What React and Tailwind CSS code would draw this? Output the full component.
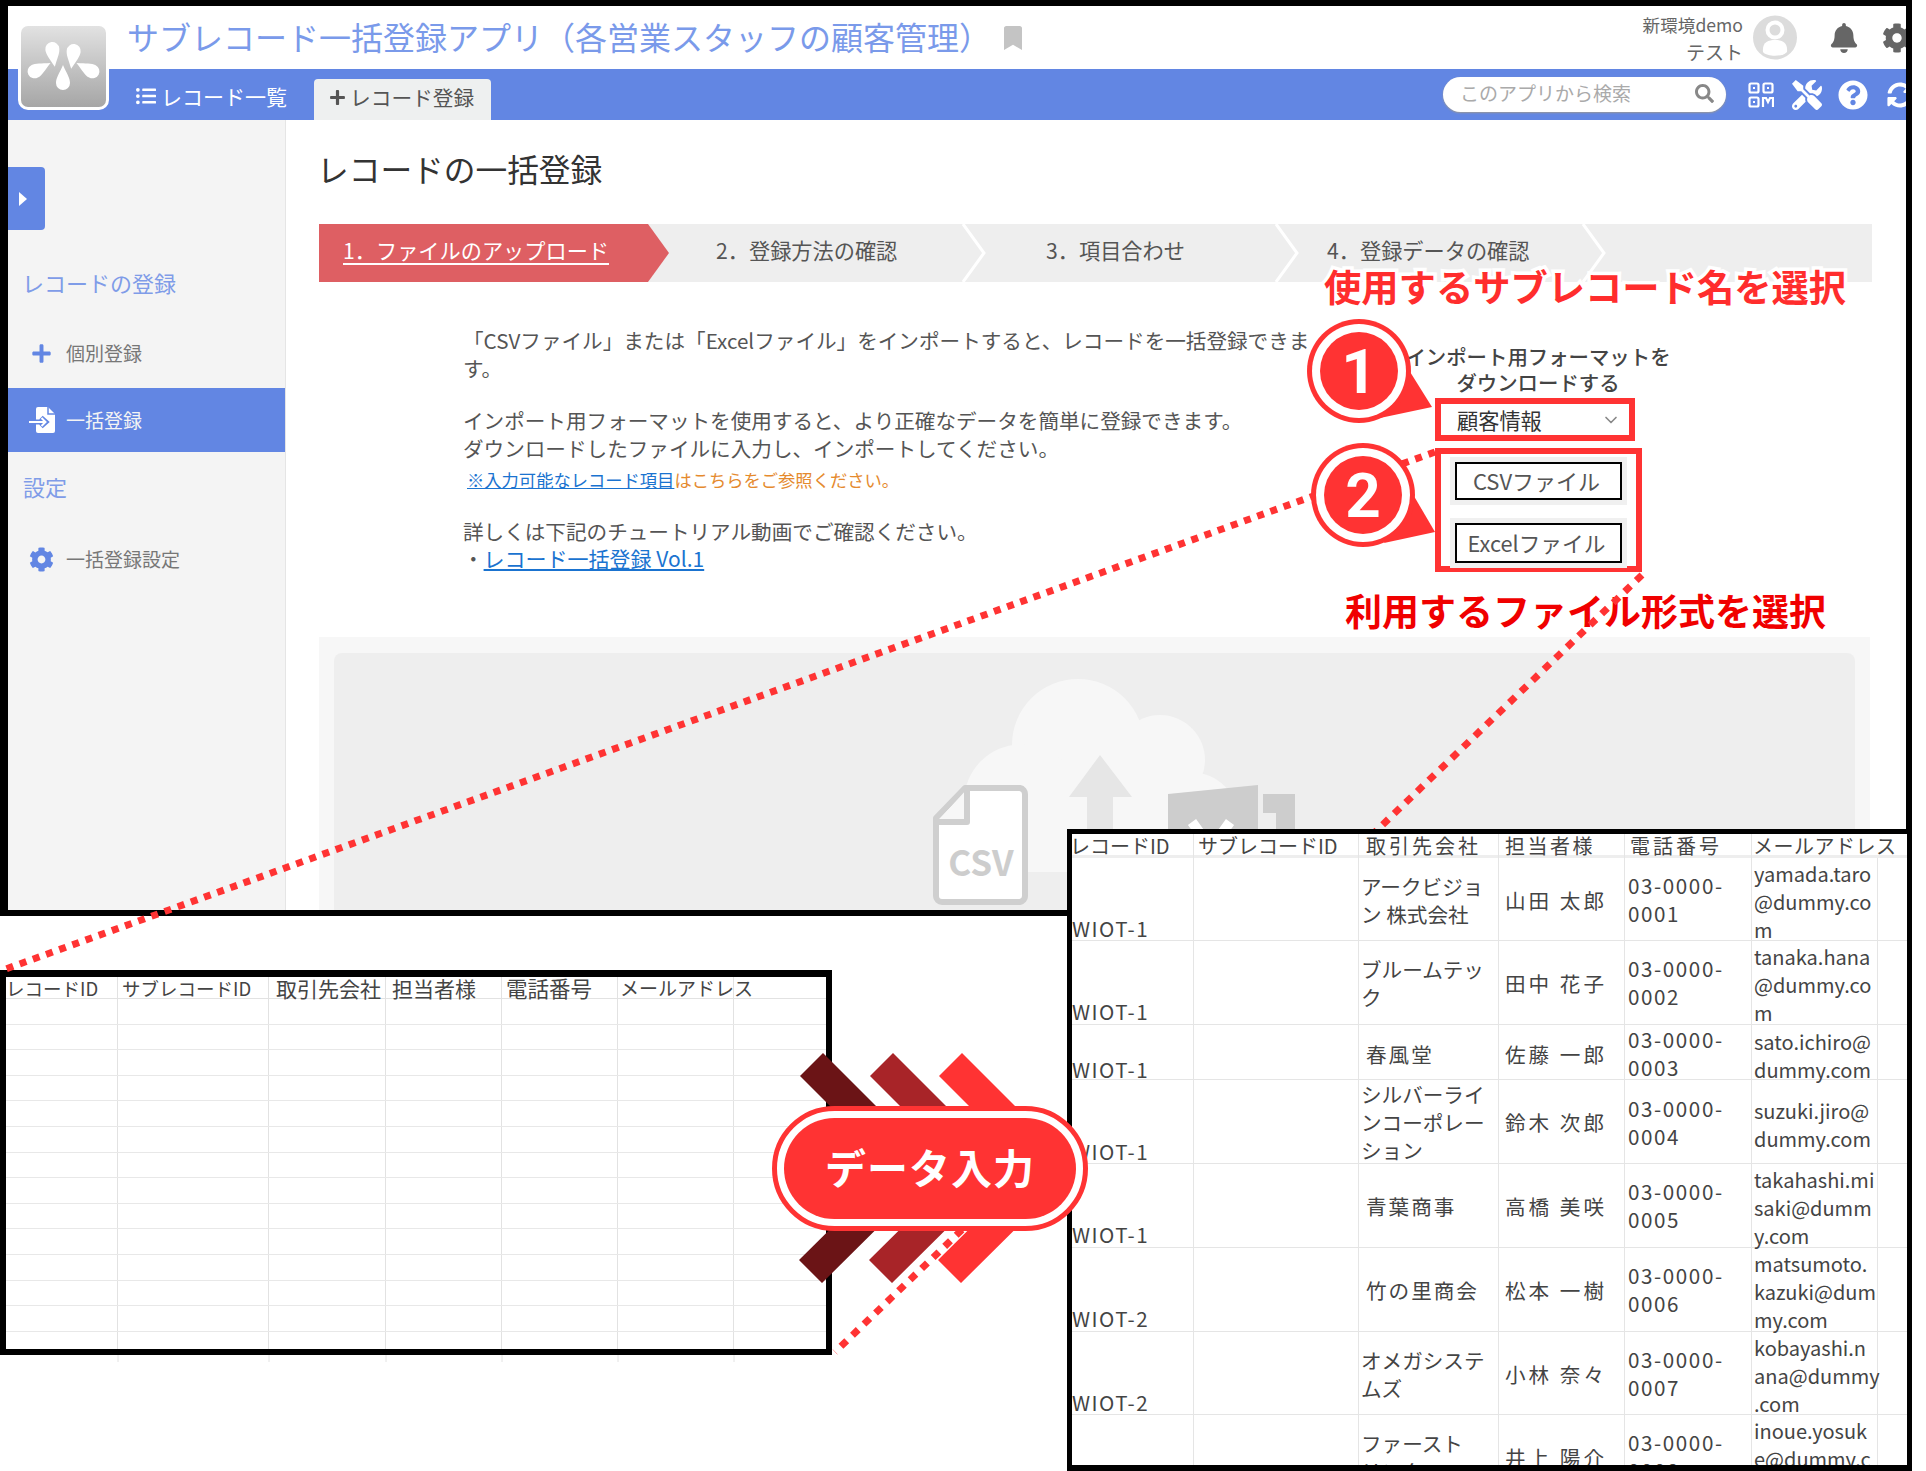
import React from 'react';
import { FaBell, FaBookmark, FaCog, FaListUl, FaPlus, FaQuestionCircle, FaSearch, FaSyncAlt, FaTools } from 'react-icons/fa';
import { ChevronDown } from 'lucide-react';

const steps = [
  { label: '1．ファイルのアップロード', w: 'w-[350px]', pl: 'pl-[24px]', active: true },
  { label: '2．登録方法の確認', w: 'w-[313px]', pl: 'pl-[47px]' },
  { label: '3．項目合わせ', w: 'w-[313px]', pl: 'pl-[64px]' },
  { label: '4．登録データの確認', w: 'w-[307px]', pl: 'pl-[32px]' },
];

const rows = [
  { h: 'h-[83px]', id: 'WIOT-1', company: ['アークビジョ', 'ン 株式会社'], person: '山田 太郎', tel: '0001', mail: ['yamada.taro', '@dummy.co', 'm'] },
  { h: 'h-[84px]', id: 'WIOT-1', company: ['ブルームテッ', 'ク'], person: '田中 花子', tel: '0002', mail: ['tanaka.hana', '@dummy.co', 'm'] },
  { h: 'h-[55px]', id: 'WIOT-1', company: ['春風堂'], wide: true, person: '佐藤 一郎', tel: '0003', mail: ['sato.ichiro@', 'dummy.com'] },
  { h: 'h-[84px]', id: 'WIOT-1', company: ['シルバーライ', 'ンコーポレー', 'ション'], person: '鈴木 次郎', tel: '0004', mail: ['suzuki.jiro@', 'dummy.com'] },
  { h: 'h-[84px]', id: 'WIOT-1', company: ['青葉商事'], wide: true, person: '高橋 美咲', tel: '0005', mail: ['takahashi.mi', 'saki@dumm', 'y.com'] },
  { h: 'h-[84px]', id: 'WIOT-2', company: ['竹の里商会'], wide: true, person: '松本 一樹', tel: '0006', mail: ['matsumoto.', 'kazuki@dum', 'my.com'] },
  { h: 'h-[83px]', id: 'WIOT-2', company: ['オメガシステ', 'ムズ'], person: '小林 奈々', tel: '0007', mail: ['kobayashi.n', 'ana@dummy', '.com'] },
  { h: 'h-[84px]', id: 'WIOT-2', company: ['ファースト', 'リンク'], person: '井上 陽介', tel: '0008', mail: ['inoue.yosuk', 'e@dummy.c', 'om'] },
];

function Logo() {
  const drop = 'M0 -13 C4 -4 7 0 7 5 A7 7 0 0 1 -7 5 C-7 0 -4 -4 0 -13Z';
  return (
    <div className="absolute left-[10px] top-[17px] z-10 h-[87px] w-[91px] rounded-[10px] border-[3px] border-white bg-gradient-to-b from-[#e2e2e2] to-[#a6a6a6]">
      <svg viewBox="0 0 85 81" className="h-full w-full" fill="#fff">
        <path d={drop} transform="translate(32 28) rotate(172)" />
        <path d={drop} transform="translate(52 30) rotate(188)" />
        <path d={drop} transform="translate(18 43) rotate(62)" />
        <path d={drop} transform="translate(67 43) rotate(-62)" />
        <path d={drop} transform="translate(42 52)" />
      </svg>
    </div>
  );
}

function Avatar() {
  return (
    <svg viewBox="0 0 44 45" className="ml-[10px] h-[45px] w-[44px] shrink-0">
      <circle cx="22" cy="22.5" r="22" fill="#dcdcdc" />
      <circle cx="22" cy="15" r="7.5" fill="none" stroke="#fff" strokeWidth="4" />
      <path d="M10 37 C9 27 15 25 22 25 C29 25 35 27 34 37 C30 42 14 42 10 37Z" fill="#fff" />
    </svg>
  );
}

function QrIcon() {
  return (
    <svg viewBox="0 0 26 26" className="ml-[22px] h-[26px] w-[26px] shrink-0" fill="none" stroke="#fff" strokeWidth="2.2">
      <rect x="1.5" y="1.5" width="9" height="9" rx="1.5" />
      <rect x="15.5" y="1.5" width="9" height="9" rx="1.5" />
      <rect x="1.5" y="15.5" width="9" height="9" rx="1.5" />
      <path d="M5 6h2M19 6h2M5 20h2" strokeWidth="2" />
      <path d="M15 25v-9h3l2 4 2-4h3v9" />
    </svg>
  );
}

function FileImportIcon() {
  return (
    <svg viewBox="0 0 27 26" className="h-[26px] w-[27px]">
      <path d="M7 2a2 2 0 0 1 2-2h10l7 7v17a2 2 0 0 1-2 2H9a2 2 0 0 1-2-2Z" fill="#fff" />
      <path d="M19 0v7h7" fill="none" stroke="#6286e3" strokeWidth="1.5" />
      <path d="M1 15h15M12 10.5l5 4.5-5 4.5" fill="none" stroke="#6286e3" strokeWidth="5" />
      <path d="M0 15h7" stroke="#fff" strokeWidth="2" />
      <path d="M7 15h9M12.5 11l4 4-4 4" fill="none" stroke="#fff" strokeWidth="2" />
    </svg>
  );
}

function UploadArt() {
  return (
    <svg viewBox="933 677 362 233" className="ml-[599px] mt-[24px] h-[233px] w-[362px]">
      <g fill="#f7f7f7">
        <circle cx="1078" cy="745" r="66" />
        <circle cx="1160" cy="760" r="45" />
        <circle cx="1022" cy="802" r="58" />
        <circle cx="1190" cy="822" r="50" />
        <rect x="1022" y="760" width="170" height="112" />
      </g>
      <path d="M1100 755 L1132 797 H1113 V880 H1087 V797 H1069Z" fill="#e6e6e6" />
      <path d="M1168 794 L1258 785 V910 H1168Z" fill="#cdcdcd" />
      <path d="M1263 794 H1295 V910 H1263 V873 H1276 V813 H1263Z" fill="#cdcdcd" />
      <path d="M1192 822 L1212 850 M1230 822 L1210 850" stroke="#fff" strokeWidth="10" />
      <path d="M965 788 H1020 A6 6 0 0 1 1025 794 V896 A6 6 0 0 1 1020 902 H942 A6 6 0 0 1 936 896 V818Z" fill="#fff" stroke="#cfcfcf" strokeWidth="6" strokeLinejoin="round" />
      <path d="M967 789 V822 H937" fill="#f7f7f7" stroke="#cfcfcf" strokeWidth="6" strokeLinejoin="round" />
      <text x="981" y="876" textAnchor="middle" fontSize="35" fontWeight="700" fill="#cdcdcd">CSV</text>
    </svg>
  );
}

function MainWindow() {
  return (
    <div className="absolute left-0 top-0 h-[916px] w-[1912px] overflow-hidden border-b-[6px] border-l-[8px] border-r-[6px] border-t-[6px] border-black bg-white">
      <Logo />
      <header className="flex h-[63px] items-center bg-white pl-[119px]">
        <h1 className="whitespace-nowrap pb-[4px] text-[32px] text-[#7a9aea]">サブレコード一括登録アプリ（各営業スタッフの顧客管理）</h1>
        <FaBookmark className="ml-[10px] text-[24px] text-[#c4c4c4]" />
        <div className="ml-auto flex items-center -mr-[6px]">
          <div className="text-right text-[17.6px] leading-[27px] text-[#666]">
            <div>新環境demo</div>
            <div className="text-[19px]">テスト</div>
          </div>
          <Avatar />
          <FaBell className="ml-[32px] shrink-0 text-[30px] text-[#666]" />
          <FaCog className="ml-[23px] shrink-0 text-[30px] text-[#666]" />
        </div>
      </header>

      <nav className="flex h-[51px] items-end bg-[#6286e3] pl-[128px]">
        <div className="mb-[8px] flex items-center gap-[5px] text-[21px] text-white">
          <FaListUl className="text-[20px]" />
          <span>レコード一覧</span>
        </div>
        <div className="ml-[27px] flex h-[41px] w-[177px] items-center gap-[4px] rounded-t bg-[#eef0f0] pb-[4px] pl-[15px] text-[20.7px] text-[#555]">
          <FaPlus className="text-[17px]" />
          <span>レコード登録</span>
        </div>
        <div className="ml-auto flex h-full items-center -mr-[7px]">
          <div className="flex h-[35px] w-[283px] items-center justify-between rounded-full bg-white pb-[2px] pl-[17px] pr-[12px] shadow-[0_1px_2px_#999]">
            <span className="text-[19px] text-[#aaa]">このアプリから検索</span>
            <FaSearch className="text-[19px] text-[#888]" />
          </div>
          <QrIcon />
          <FaTools className="ml-[18px] text-[30px] text-white" />
          <FaQuestionCircle className="ml-[16px] text-[30px] text-white" />
          <FaSyncAlt className="ml-[19px] text-[26px] text-white" />
        </div>
      </nav>

      <div className="flex h-[790px]">
        <aside className="w-[278px] shrink-0 border-r border-[#e5e5e5] bg-[#f4f4f4]">
          <div className="mt-[47px] flex h-[63px] w-[37px] items-center rounded-r bg-[#6286e3] pl-[11px]">
            <div className="h-0 w-0 border-y-[7px] border-l-[8px] border-y-transparent border-l-white" />
          </div>
          <div className="ml-[14px] mt-[37px] h-[30px] text-[22px] leading-[30px] text-[#7f9ce8]">レコードの登録</div>
          <div className="mt-[27px] flex h-[64px] items-center pb-[6px] pl-[23px] text-[19px] text-[#777]">
            <FaPlus className="text-[21px] text-[#6286e3]" />
            <span className="ml-[14px]">個別登録</span>
          </div>
          <div className="flex h-[64px] items-center bg-[#6286e3] pl-[21px] text-[19px] text-[#f4f4f4]">
            <FileImportIcon />
            <span className="ml-[10px]">一括登録</span>
          </div>
          <div className="ml-[15px] mt-[19px] h-[30px] text-[22px] leading-[30px] text-[#7f9ce8]">設定</div>
          <div className="mt-[26px] flex h-[64px] items-center pl-[21px] text-[19px] text-[#777]">
            <FaCog className="text-[25px] text-[#6286e3]" />
            <span className="ml-[12px]">一括登録設定</span>
          </div>
        </aside>

        <main className="min-w-0 flex-1 px-[33px]">
          <h2 className="-ml-[2px] mt-[27px] h-[42px] text-[31.7px] leading-[42px] text-[#333]">レコードの一括登録</h2>

          <ol className="mt-[35px] flex h-[58px] w-[1553px] bg-[#eeeeee]">
            {steps.map(step => (
              <li key={step.label} className={`relative flex h-full items-center ${step.w} ${step.pl} pb-[7px] text-[21.2px] text-[#555]`}>
                {step.active ? (
                  <>
                    <div className="absolute inset-0 bg-[#de5f63] [clip-path:polygon(0_0,329px_0,100%_50%,329px_100%,0_100%)]" />
                    <a className="relative text-white underline underline-offset-4">{step.label}</a>
                  </>
                ) : (
                  <>
                    <span>{step.label}</span>
                    <svg viewBox="0 0 24 58" className="absolute right-[-4px] top-0 h-[58px] w-[24px]">
                      <path d="M1 0 L22 29 L1 58" fill="none" stroke="#fff" strokeWidth="3" />
                    </svg>
                  </>
                )}
              </li>
            ))}
          </ol>

          <div className="mt-[44px] flex h-[246px]">
            <div className="w-[1069px] shrink-0 pl-[144px] text-[20.6px] leading-[28px] text-[#555]">
              <p className="whitespace-nowrap">「CSVファイル」または「Excelファイル」をインポートすると、レコードを一括登録できま<br />す。</p>
              <p className="mt-[24px] whitespace-nowrap">インポート用フォーマットを使用すると、より正確なデータを簡単に登録できます。<br />ダウンロードしたファイルに入力し、インポートしてください。</p>
              <p className="ml-[4px] h-[36px] text-[17.3px] leading-[36px] text-[#e58a2e]"><a className="text-[#1a73d0] underline">※入力可能なレコード項目</a>はこちらをご参照ください。</p>
              <p className="mt-[20px] leading-[27px]">詳しくは下記のチュートリアル動画でご確認ください。<br />・<a className="text-[21px] text-[#1a73d0] underline">レコード一括登録 Vol.1</a></p>
            </div>
            <div className="mt-[18px] w-[300px] shrink-0">
              <div className="pb-[1px] text-center text-[20.4px] font-medium leading-[25.5px] text-[#444]">インポート用フォーマットを<br />ダウンロードする</div>
              <div className="ml-[47px] mt-[2px] flex h-[43px] w-[200px] items-center justify-between border-[6px] border-[#ff3333] pl-[16px] pr-[8px] text-[21.2px] text-[#333]">
                <span>顧客情報</span>
                <ChevronDown className="h-5 w-5 text-[#888]" />
              </div>
              <div className="ml-[47px] mt-[7px] flex h-[124px] w-[207px] flex-col gap-[23px] border-[6px] border-[#ff3333] pl-[14px] pt-[8px]">
                <button className="flex h-[38px] w-[167px] items-center justify-center border-2 border-black bg-white pb-[2px] pr-[4px] text-[22px] text-[#555] shadow-[0_0_0_5px_#f0f0f0]">CSVファイル</button>
                <button className="flex h-[40px] w-[167px] items-center justify-center border-2 border-black bg-white pr-[4px] pt-[1px] text-[21.7px] text-[#555] shadow-[0_0_0_5px_#f0f0f0]">Excelファイル</button>
              </div>
            </div>
          </div>

          <div className="mt-[65px] h-[273px] w-[1551px] bg-[#f7f7f7] px-[15px] pt-[16px]">
            <div className="h-full overflow-hidden rounded-t-lg bg-[#eeeeee]">
              <UploadArt />
            </div>
          </div>
        </main>
      </div>
    </div>
  );
}

function BlankSheet() {
  const heads = [
    { label: 'レコードID', w: 'w-[112px]', cls: 'pl-0 text-[18.5px]' },
    { label: 'サブレコードID', w: 'w-[151px]', cls: 'pl-[4px] text-[18.5px]' },
    { label: '取引先会社', w: 'w-[117px]', cls: 'pl-[7px] text-[21px]' },
    { label: '担当者様', w: 'w-[116px]', cls: 'pl-[6px] text-[21px]' },
    { label: '電話番号', w: 'w-[116px]', cls: 'pl-[4px] text-[21.5px]' },
    { label: 'メールアドレス', w: 'w-[116px]', cls: 'pl-[2px] text-[19px]' },
  ];
  return (
    <div className="absolute left-0 top-[970px] h-[385px] w-[832px] overflow-hidden border-b-[6px] border-l-[6px] border-r-[6px] border-t-[7px] border-black bg-white">
      <div className="flex h-[22px] border-b border-[#e2e2e2] leading-[22px] text-[#444]">
        {heads.map(head => (
          <div key={head.label} className={`${head.w} ${head.cls} shrink-0 whitespace-nowrap border-r border-[#e2e2e2]`}>{head.label}</div>
        ))}
      </div>
      {Array.from({ length: 14 }).map((_, i) => (
        <div key={i} className="flex h-[25.6px] border-b border-[#e8e8e8]">
          {heads.map(head => (
            <div key={head.label} className={`${head.w} shrink-0 border-r border-[#e2e2e2]`} />
          ))}
        </div>
      ))}
    </div>
  );
}

function FilledSheet() {
  return (
    <div className="absolute left-[1067px] top-[829px] h-[642px] w-[845px] overflow-hidden border-[5px] border-b-[6px] border-black bg-white text-[20.6px] leading-[28px] text-[#444]">
      <div className="grid h-[24px] grid-cols-[122px_165px_140px_126px_127px_155px] whitespace-nowrap border-b-[3px] border-[#eeeeee] text-[20px] leading-[24px]">
        <div className="-ml-[2px] border-r border-[#e5e5e5]">レコードID</div>
        <div className="border-r border-[#e5e5e5] pl-[4px]">サブレコードID</div>
        <div className="border-r border-[#e5e5e5] pl-[7px] tracking-[3px]">取引先会社</div>
        <div className="border-r border-[#e5e5e5] pl-[6px] tracking-[2.5px]">担当者様</div>
        <div className="border-r border-[#e5e5e5] pl-[5px] tracking-[3px]">電話番号</div>
        <div className="pl-[1px] tracking-[0.5px]">メールアドレス</div>
      </div>
      {rows.map(row => (
        <div key={row.tel} className={`grid ${row.h} grid-cols-[122px_165px_140px_126px_127px_126px_29px] border-b border-[#e5e5e5]`}>
          <div className="flex items-end border-r border-[#e5e5e5] pb-[5px] leading-[22px] tracking-[1.5px]">{row.id}</div>
          <div className="border-r border-[#e5e5e5]" />
          <div className={`flex items-center border-r border-[#e5e5e5] pb-[3px] ${row.wide ? 'pl-[7px] tracking-[2px]' : 'pl-[2px]'}`}>
            <div className="whitespace-nowrap">{row.company.map(line => <div key={line}>{line}</div>)}</div>
          </div>
          <div className="flex items-center whitespace-nowrap border-r border-[#e5e5e5] pb-[3px] pl-[6px] tracking-[3px]">{row.person}</div>
          <div className="flex items-center border-r border-[#e5e5e5] pb-[4px] pl-[3px] tracking-[1.6px]">
            <div>03-0000-<br />{row.tel}</div>
          </div>
          <div className="flex items-center border-r border-[#e5e5e5] pl-[2px] pt-[2px] text-[20px]">
            <div className="whitespace-nowrap">{row.mail.map(line => <div key={line}>{line}</div>)}</div>
          </div>
          <div />
        </div>
      ))}
    </div>
  );
}

function Chevron({ dx, fill }) {
  const pts = [[823, 1053], [938, 1168], [822, 1283], [799, 1260], [892, 1168], [800, 1076]];
  return <polygon points={pts.map(([x, y]) => `${x + dx},${y}`).join(' ')} fill={fill} />;
}

function Callout({ cx, cy, tail, num }) {
  return (
    <g>
      <polygon points={tail} fill="#ff3333" />
      <circle cx={cx} cy={cy} r="52" fill="#ff3333" />
      <circle cx={cx} cy={cy} r="47" fill="#fff" />
      <circle cx={cx} cy={cy} r="39" fill="#ff3333" />
      <text x={cx} y={cy + 22} textAnchor="middle" fontFamily="Roboto, sans-serif" fontSize="62" fontWeight="700" fill="#fff">{num}</text>
    </g>
  );
}

function Overlay() {
  return (
    <svg viewBox="0 0 1926 1471" className="absolute left-0 top-0 h-[1471px] w-[1926px]">
      <Chevron dx={0} fill="#6b1416" />
      <Chevron dx={70} fill="#a82428" />
      <Chevron dx={139} fill="#ff3333" />
      <line x1="1642" y1="575" x2="835" y2="1352" stroke="#ff3333" strokeWidth="7" strokeDasharray="8 8" />
      <line x1="1435" y1="452" x2="3" y2="970" stroke="#ff3333" strokeWidth="7" strokeDasharray="7 7" />
      <path d="M118 1355v7M269 1355v7M386 1355v7M502 1355v7M618 1355v7M734 1355v7" stroke="#e2e2e2" strokeWidth="1" />
      <Callout cx={1359} cy={371} tail="1407,367 1432,407 1380,418" num="1" />
      <Callout cx={1363} cy={495} tail="1411,491 1435,532 1384,543" num="2" />
    </svg>
  );
}

export default function App() {
  return (
    <div className="relative h-[1471px] w-[1926px] overflow-hidden bg-white font-['Noto_Sans_CJK_JP','Noto_Sans',sans-serif]">
      <MainWindow />
      <BlankSheet />
      <div className="absolute left-[1324px] top-[264px] whitespace-nowrap text-[37.3px] font-bold leading-[44px] text-[#ff2d2d] [-webkit-text-stroke:7px_white] [paint-order:stroke_fill]">使用するサブレコード名を選択</div>
      <div className="absolute left-[1345px] top-[588px] whitespace-nowrap text-[37px] font-bold leading-[44px] text-[#f00000] [-webkit-text-stroke:7px_white] [paint-order:stroke_fill]">利用するファイル形式を選択</div>
      <Overlay />
      <FilledSheet />
      <div className="absolute left-[772px] top-[1106px] h-[125px] w-[316px] rounded-full border-[5px] border-[#ff3333] bg-white p-[7px]">
        <div className="flex h-full items-center justify-center rounded-full bg-[#ff3333] pb-[3px] text-[41px] font-bold tracking-[1px] text-white">データ入力</div>
      </div>
    </div>
  );
}
